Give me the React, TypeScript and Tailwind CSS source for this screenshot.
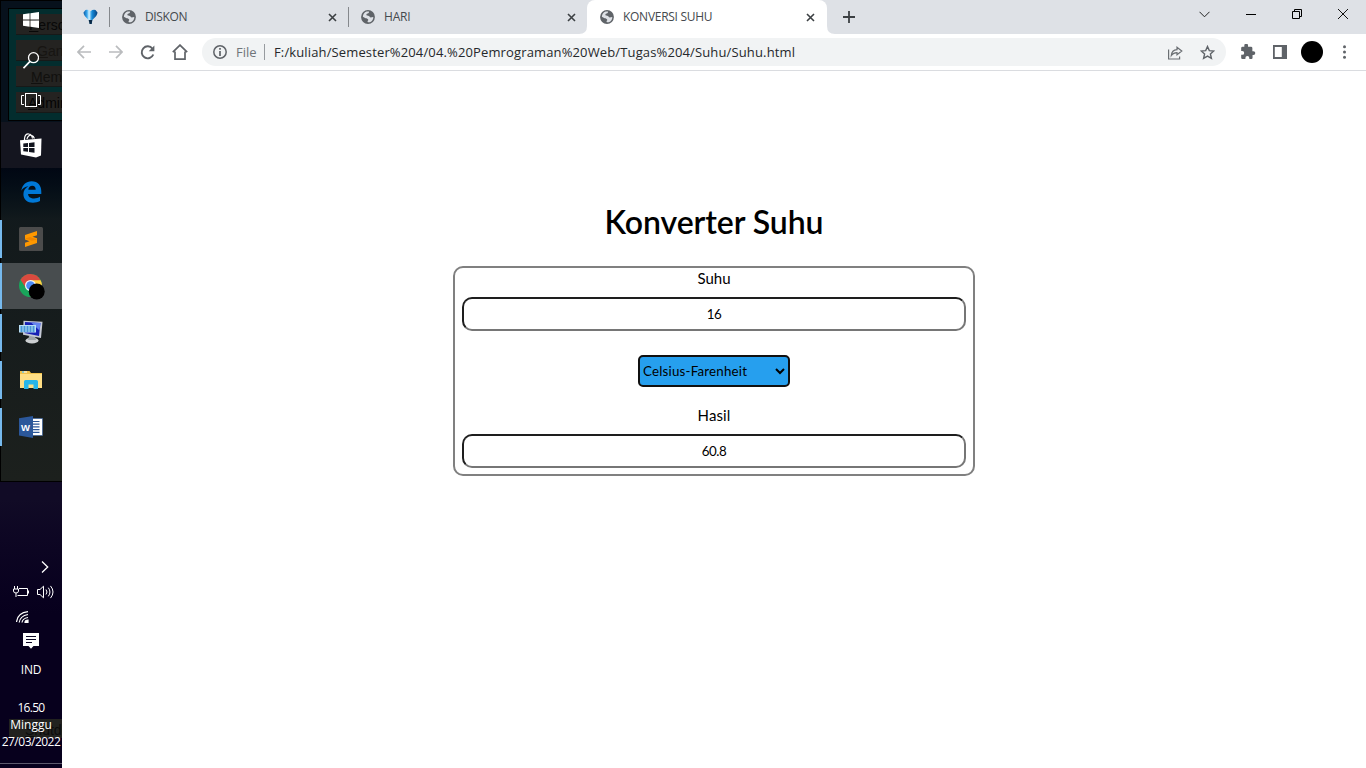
import React from 'react';

type TextProps = { text: string; className: string };

const segoe = "font-['Open_Sans','Noto_Sans',sans-serif]";
const rounded = "font-['Lato',sans-serif]";

function Globe() {
  return (
    <svg width="14" height="14" viewBox="0 0 15 15" className="shrink-0">
      <circle cx="7.5" cy="7.5" r="7.4" fill="#5f6368" />
      <path d="M8.6 1.6c-.2 1 .2 1.3-.8 1.8-1 .5-2 .3-2 1.5 0 1 .5 1.2 1.8 1.2 1.500 0 1.500 1.200 2.200 1.700.8.5 2.300-.4 3.400-.3.100 2.500-1.400 4.800-3.700 5.600-.8.100-2 .1-2.500-.2.100-1 .2-1.700.9-2.300-.5-1.400-1.700-1.700-3-1.800L2 7.200C2.100 4.700 3.600 2.300 6 1.700z" fill="#dee1e6" />
    </svg>
  );
}

function Close() {
  return (
    <svg width="9" height="9" viewBox="0 0 9 9" className="shrink-0">
      <path d="M1 1l7 7M8 1l-7 7" stroke="#3c4043" strokeWidth="1.6" />
    </svg>
  );
}

function TabLabel({ text, className }: TextProps) {
  return <span className={`${segoe} ml-[9px] flex-1 whitespace-nowrap text-[12px] leading-4 ${className}`}>{text}</span>;
}

function StartIcon() {
  return (
    <svg width="16" height="16" viewBox="0 0 16 16" fill="#fff">
      <path d="M0 2.300L6.600 1.300V7.500H0zM7.400 1.200L16 0V7.500H7.400zM0 8.400H6.600V14.700L0 13.700zM7.400 8.400H16V16L7.400 14.800z" />
    </svg>
  );
}

function SearchIcon() {
  return (
    <svg width="16" height="17" viewBox="0 0 16 17" fill="none" stroke="#fff" strokeWidth="1.300">
      <circle cx="10.500" cy="5.700" r="5" />
      <path d="M7 9.400L.5 16.200" strokeWidth="1.700" />
    </svg>
  );
}

function TaskViewIcon() {
  return (
    <svg width="20" height="14" viewBox="0 0 20 14" fill="none" stroke="#fff">
      <rect x="4.500" y=".5" width="11" height="13" />
      <path d="M3 2.500H.5v9H3M17 2.500h2.500v9H17" />
    </svg>
  );
}

function StoreIcon() {
  return (
    <svg width="22" height="25" viewBox="0 0 22 25">
      <path d="M4.500 7V5.500C5 2 7 .8 8.800 1c2 .1 3.200 2 3.700 4.500M7 6c.4-2.500 2.500-4.200 4.500-3.700 1.500.3 2.500 1.500 2.900 3.200" fill="none" stroke="#fff" strokeWidth="1.200" />
      <path d="M0 7.200L21.500 5.500 21 22.500 16 24.500 1 21.500z" fill="#fff" />
      <path d="M3.300 10.500L8 10v4H3.300zM9 9.900l5.500-.6V14H9zM3.300 15H8v3.800l-4.700-.6zM9 15h5.500v4.700L9 19z" fill="#11141e" />
    </svg>
  );
}

function EdgeIcon() {
  return (
    <svg width="21" height="22" viewBox="0 0 21 22">
      <path d="M.3 9.700C1.200 3.900 5.100.2 10.600.2c6.400 0 10 4.800 9.700 10.500v2.200H7.100c.1 3 2.800 4.500 5.900 4.500 2.200 0 4.300-.6 6-1.700v4.400c-2 1.100-4.400 1.700-7.100 1.700-5.500 0-9.500-3.400-9.500-8.500 0-3.500 1.800-6.300 5-8C4 5.700 1.500 7.500.3 9.700zm7-1h7.400c0-2.500-1.300-3.900-3.400-3.900S7.700 6.300 7.300 8.700z" fill="#0078d7" />
    </svg>
  );
}

function SublimeIcon() {
  return (
    <svg width="24" height="24" viewBox="0 0 24 24">
      <rect width="24" height="24" rx="1.500" fill="#4b4b4b" />
      <path d="M6 7.900L18 4v4.300L13.500 9.700l4.500 1.600v4.700L6 20v-4.300l4.500-1.500-4.500-1.700z" fill="#ff9800" />
      <path d="M6 11.500l7 2.200 5-1.300-7-2.300z" fill="#ef8500" />
    </svg>
  );
}

function ChromeIcon() {
  return (
    <svg className="relative left-px top-px" width="26" height="26" viewBox="0 0 26 26">
      <circle cx="11.500" cy="11.500" r="11.500" fill="#19a55b" />
      <path d="M11.500 11.500L1.500 5.700A11.500 11.500 0 0 1 21.500 6z" fill="#db4a3f" />
      <path d="M11.500 6.300h10.200a11.500 11.500 0 0 1-10.200 16.700l5-8.500z" fill="#ffcd41" />
      <path d="M11.500 6.300L1.500 5.700l5.500 8.500z" fill="#db4a3f" />
      <circle cx="11.500" cy="11.500" r="5.500" fill="#f3f5f8" />
      <circle cx="11.500" cy="11.500" r="4.300" fill="#4c8bf5" />
      <circle cx="17.700" cy="17.500" r="8" fill="#000" />
    </svg>
  );
}

function ComputerIcon() {
  return (
    <svg className="relative -top-px" width="24" height="24" viewBox="0 0 24 24">
      <ellipse cx="13" cy="20.500" rx="6.500" ry="3" fill="#cdd0d2" />
      <path d="M10 16h6l1 4H9z" fill="#9ea4a9" />
      <path d="M4.500.8L23.500 1.700 22 18 4 14.700z" fill="#c5c9d5" />
      <path d="M6 2l15.500 1L20 16 5.500 13z" fill="#1720b5" />
      <path d="M12 2.400l9.500.6-1 7.500z" fill="#6584ef" />
      <rect x="0" y="5" width="17" height="7.500" fill="#b9dff6" />
      <path d="M1.500 7H16M1.500 9H16M1.500 11H16" stroke="#2580cc" strokeWidth="1.300" strokeDasharray="2 1" />
    </svg>
  );
}

function FolderIcon() {
  return (
    <svg className="relative -top-px" width="22" height="19" viewBox="0 0 22 19">
      <path d="M0 1h9.500l1.500 2H22v14.500H0z" fill="#f1c24c" />
      <path d="M0 4h22v14H0z" fill="#ffdf85" />
      <path d="M2 2h5" stroke="#fff" />
      <path d="M2 2h2" stroke="#35b5dc" />
      <path d="M4 11.500q0-1.500 1.500-1.500h11q1.500 0 1.500 1.500V19h-4.500v-4.500h-5V19H4z" fill="#29b6e8" />
    </svg>
  );
}

function WordIcon() {
  return (
    <svg width="24" height="22" viewBox="0 0 24 22">
      <rect x="12" y="2.500" width="11.500" height="17" fill="#fff" stroke="#2b579a" strokeWidth=".6" />
      <path d="M14 5.500h6.500M14 8.200h6.500M14 10.900h6.500M14 13.600h6.500M14 16.300h6.500" stroke="#2b579a" strokeWidth="1.200" />
      <path d="M0 2.300L14 0v22L0 19.600z" fill="#2b579a" />
      <text x="2" y="14.500" fontFamily="Liberation Sans, sans-serif" fontWeight="700" fontSize="9.500" fill="#fff">W</text>
    </svg>
  );
}

const tasks = [
  { icon: <StoreIcon />, open: false, active: false },
  { icon: <EdgeIcon />, open: false, active: false },
  { icon: <SublimeIcon />, open: true, active: false },
  { icon: <ChromeIcon />, open: true, active: true },
  { icon: <ComputerIcon />, open: true, active: false },
  { icon: <FolderIcon />, open: true, active: false },
  { icon: <WordIcon />, open: true, active: false },
];

const ghostButtons = [
  { text: 'Perso', tone: 'text-[#080808] pl-[13px]' },
  { text: 'Gan', tone: 'text-[#171512] pl-[21px]' },
  { text: 'Mem', tone: 'text-[#11100e] pl-[15px]' },
  { text: 'Admin', tone: 'text-[#040404] pl-[12px]' },
];

function Taskbar() {
  return (
    <aside className="relative h-full w-[62px] shrink-0 overflow-hidden bg-gradient-to-b from-[#110b26] from-65% to-[#07001d] to-80% text-white">
      <div className="absolute inset-x-0 top-0 h-[482px] border border-r-0 border-black bg-gradient-to-b from-[#071321] from-0% via-[#131a1c] via-50% to-[#1c201d]">
        <div className="h-[121px] overflow-hidden bg-[#07111c] pl-[7px] pt-[7px]">
          <div className="flex h-[113px] w-[80px] flex-col gap-[5px] border border-black bg-[#032d2e] pl-[7px] pt-[5px] font-['Liberation_Sans',sans-serif] text-[14px]">
            {ghostButtons.map((b) => (
              <div key={b.text} className={`h-[21px] shrink-0 border-b border-[#171918] bg-[#242321] leading-[22px] first-letter:underline ${b.tone}`}>{b.text}</div>
            ))}
          </div>
        </div>
        <div className="h-[46px] bg-[#14151f]" />
        <div className="h-[50px] bg-gradient-to-b from-[#010713] to-[#11191c]" />
      </div>
      <div className="absolute left-[9px] top-[719px] h-[19px] w-[60px] bg-[#22221f] pl-4 font-['Liberation_Sans',sans-serif] text-[14px] leading-[22px] text-[#0c0c0c] first-letter:underline">Shutdo</div>
      <div className="absolute inset-x-0 top-[763px] h-px bg-[#5c596c]" />

      <div className="relative flex h-full flex-col">
        <div className="flex h-10 items-center justify-center"><StartIcon /></div>
        <div className="flex h-10 items-center justify-center"><SearchIcon /></div>
        <div className="flex h-10 items-center justify-center"><TaskViewIcon /></div>
        <div className="mt-[2px] flex flex-col gap-px">
          {tasks.map((task, i) => (
            <div key={i} className={`flex h-[46px] items-center ${task.active ? 'bg-[#484d4f]' : ''}`}>
              <div className={`w-[2px] ${task.active ? 'h-full' : 'h-[38px]'} ${task.open ? 'bg-[#76b9ed]' : ''}`} />
              <div className="flex flex-1 justify-center pr-[2px]">{task.icon}</div>
            </div>
          ))}
        </div>

        <div className="mt-[111px] flex h-3 justify-end pr-[13px]">
          <svg width="8" height="12" viewBox="0 0 8 12" fill="none" stroke="#fff" strokeWidth="1.300"><path d="M1 .5L6.700 6 1 11.500" /></svg>
        </div>
        <div className="mt-[12px] flex h-[14px] items-center gap-[8px] pl-[13px]">
          <svg width="16" height="14" viewBox="0 0 16 14" fill="none" stroke="#fff"><path d="M6 3.500h8.500v7H4.500M15.500 5.500v3M1.500 1v3M4.500 1v3M.5 4h5v2q0 2-2.500 2T.5 6zM3 8v4" /></svg>
          <svg width="17" height="14" viewBox="0 0 17 14" fill="none" stroke="#fff"><path d="M.5 4.500H3l3.500-3.300v11.600L3 9.500H.5zM9 4.500q2 2.500 0 5M11.300 2.700q3.300 4.300 0 8.600M13.500.9q5 6.100 0 12.200" /></svg>
        </div>
        <div className="mt-[12px] flex h-3 pl-4">
          <svg width="13" height="12" viewBox="0 0 13 12" fill="none" stroke="#fff" strokeWidth="1.200"><path d="M.5 11Q1.500 2 12 .7M3.200 11.500Q4 5 12 3.500M6 11.500Q6.500 7.500 12 6.500" /><path d="M9 11.500q0-2.500 3-2.500v2.500z" fill="#fff" /></svg>
        </div>
        <div className="mt-[10px] flex h-4 pl-[23px]">
          <svg width="16" height="16" viewBox="0 0 16 16"><path d="M0 0h16v13h-5.500L8 15.700 5.500 13H0z" fill="#fff" /><path d="M3 3.500h10M3 6.500h10M3 9.500h6" stroke="#0c0624" /></svg>
        </div>
        <div className={`${segoe} flex flex-col items-center whitespace-nowrap text-[12px]`}>
          <div className="mt-[13px] h-4 leading-4 tracking-[-0.2px]">IND</div>
          <div className="mt-[22px] h-4 leading-4 tracking-[-0.7px]">16.50</div>
          <div className="mt-px h-4 leading-4 tracking-normal">Minggu</div>
          <div className="mt-px h-4 leading-4 tracking-[-0.5px]">27/03/2022</div>
        </div>
      </div>
    </aside>
  );
}

function TabStrip() {
  return (
    <div className="flex h-[34px] bg-[#dee1e6] text-[#45494d]">
      <div className="flex w-[47px] items-center pl-[21px]">
        <svg width="15" height="16" viewBox="0 0 15 16">
          <defs><linearGradient id="drop" x1="0" x2="1"><stop stopColor="#0759a4" /><stop offset=".25" stopColor="#38a8ee" /><stop offset=".4" stopColor="#d7f4ff" /><stop offset=".6" stopColor="#168cdb" /><stop offset="1" stopColor="#063f7c" /></linearGradient></defs>
          <path d="M2.500 1Q5 .2 7.500 2.200 10 .2 12.500 1l2 2.500q0 3-5.200 7.500L8.700 15H6.500L5.700 11Q.5 6.500.5 3.500z" fill="url(#drop)" />
          <path d="M5.700 11h3.600l-.6 4H6.500z" fill="#092946" />
        </svg>
      </div>
      <div className="mt-[7px] h-5 w-px bg-[#85888c]" />
      <div className="flex w-[238px] items-center pl-[12px] pr-[11px]">
        <Globe /><TabLabel text="DISKON" className="tracking-[-0.35px]" /><Close />
      </div>
      <div className="mt-[7px] h-5 w-px bg-[#85888c]" />
      <div className="relative z-10 flex w-[238px] items-center pl-[12px] pr-[11px]">
        <Globe /><TabLabel text="HARI" className="tracking-[-0.2px]" /><Close />
      </div>
      <div className="relative flex w-[240px] items-center rounded-t-[8px] bg-white pl-[13px] pr-[12px]">
        <svg className="absolute -left-2 bottom-0" width="8" height="8" viewBox="0 0 8 8"><path d="M8 0v8H0Q8 8 8 0" fill="#fff" /></svg>
        <svg className="absolute -right-2 bottom-0" width="8" height="8" viewBox="0 0 8 8"><path d="M0 0v8h8Q0 8 0 0" fill="#fff" /></svg>
        <Globe /><TabLabel text="KONVERSI SUHU" className="tracking-[-0.28px]" /><Close />
      </div>
      <div className="flex flex-1 items-center pl-[16px]">
        <svg width="12" height="12" viewBox="0 0 12 12"><path d="M6 0v12M0 6h12" stroke="#3c4043" strokeWidth="1.800" /></svg>
      </div>
      <div className="flex h-7 items-center gap-[36px] pr-[18px]">
        <svg width="11" height="7" viewBox="0 0 11 7" fill="none" stroke="#222"><path d="M.5.8l5 5 5-5" /></svg>
        <svg width="10" height="10" viewBox="0 0 10 10"><path d="M0 5.500h10" stroke="#000" /></svg>
        <svg width="10" height="10" viewBox="0 0 10 10" fill="none" stroke="#000"><path d="M.5 2.500h7v7h-7zM2.500 2.500v-2h7v7h-2" /></svg>
        <svg width="10" height="10" viewBox="0 0 10 10"><path d="M0 0l10 10M10 0L0 10" stroke="#111" /></svg>
      </div>
    </div>
  );
}

function Toolbar() {
  return (
    <div className="flex h-[37px] items-center border-b border-[#dadce0] bg-white pl-[15px] pr-[20px]">
      <svg width="14" height="14" viewBox="0 0 14 14" fill="none" stroke="#babcbe" strokeWidth="1.700"><path d="M14 7H1.500M7 .8L1 7l6 6.200" /></svg>
      <svg className="ml-[18px]" width="14" height="14" viewBox="0 0 14 14" fill="none" stroke="#babcbe" strokeWidth="1.700"><path d="M0 7h12.500M7 .8L13 7l-6 6.200" /></svg>
      <svg className="ml-[17px]" width="15" height="15" viewBox="0 0 15 15" fill="none" stroke="#5f6368" strokeWidth="1.900"><path d="M12.500 3.700A6 6 0 1 0 13.300 9.500" /><path d="M14.400.6v5.700H8.700z" fill="#5f6368" stroke="none" /></svg>
      <svg className="ml-[17px]" width="16" height="16" viewBox="0 0 16 16" fill="none" stroke="#5f6368" strokeWidth="1.700"><path d="M.8 8.200L8 1.100l7.200 7.100M3 7.500v7.600h10V7.500" /></svg>
      <div className={`${segoe} ml-[14px] flex h-7 flex-1 items-center whitespace-nowrap rounded-full bg-[#f1f3f4] pl-[11px] pr-[11px] text-[13px] text-[#25282b]`}>
        <svg width="14" height="14" viewBox="0 0 14 14"><circle cx="7" cy="7" r="6.200" fill="none" stroke="#5f6368" strokeWidth="1.500" /><path d="M7 3v1.700M7 6v5" stroke="#5f6368" strokeWidth="1.700" /></svg>
        <span className="ml-[9px] w-[28px] pt-px text-[#70757a]">File</span>
        <span className="h-4 w-px bg-[#979b9f]" />
        <span className="ml-[9px] flex-1 pt-px tracking-[0.135px]">F:/kuliah/Semester%204/04.%20Pemrograman%20Web/Tugas%204/Suhu/Suhu.html</span>
        <svg width="16" height="15" viewBox="0 0 16 15" fill="none" stroke="#6a6e72" strokeWidth="1.200"><path d="M1.600 4.500v9.500h11v-2.500M4.300 10.500C4.600 6.500 6.500 4.800 10 4.700V2.200L14.800 6 10 9.800V7.700C7.500 7.700 5.700 8.500 4.300 10.500z" /></svg>
        <svg className="ml-[17px]" width="15" height="15" viewBox="0 0 15 15" fill="none" stroke="#5f6368" strokeWidth="1.400"><path d="M7.500 1.500l1.800 4.100 4.500.4-3.400 3 1 4.400-3.900-2.300-3.900 2.300 1-4.400-3.400-3 4.500-.4z" /></svg>
      </div>
      <svg className="ml-[14px]" width="16" height="16" viewBox="0 0 16 16"><path d="M13.500 8H12.400V4.800q0-1.400-1.400-1.400H8V2.200a1.900 1.900 0 0 0-3.800 0v1.200H2.500Q1 3.400 1 4.800v2.900h1.100a2 2 0 0 1 0 4H1v3q0 1.300 1.300 1.300h3v-1.200a2 2 0 0 1 4 0V16h2.100q1.200 0 1.200-1.300v-2.900h.9a1.900 1.900 0 0 0 0-3.800z" transform="translate(.2 -.6) scale(.98)" fill="#5f6368" /></svg>
      <svg className="ml-[17px]" width="14" height="14" viewBox="0 0 14 14"><path d="M0 0h14v14H0zM1.800 2v10h7V2z" fillRule="evenodd" fill="#5f6368" /></svg>
      <div className="ml-[14px] size-[22px] rounded-full bg-black" />
      <svg className="ml-[20px]" width="3" height="14" viewBox="0 0 3 14" fill="#5f6368"><circle cx="1.500" cy="1.700" r="1.500" /><circle cx="1.500" cy="7" r="1.500" /><circle cx="1.500" cy="12.300" r="1.500" /></svg>
    </div>
  );
}

function Field({ value }: { value: string }) {
  return (
    <div className="flex h-[34px] items-center justify-center rounded-[10px] border-2 border-b-[#767676] border-l-[#1e1e1e] border-r-[#767676] border-t-[#1e1e1e] text-[13.333px] leading-4 tracking-[-0.4px] text-black">{value}</div>
  );
}

function Page() {
  return (
    <main className={`${rounded} flex flex-1 flex-col items-center bg-white text-black`}>
      <h1 className="mt-[131px] whitespace-nowrap text-[32px] font-semibold leading-[40px] tracking-[-0.07px]">Konverter Suhu</h1>
      <section className="mt-[24px] h-[210px] w-[522px] rounded-[10px] border-2 border-[#808080] px-[7px] text-center text-[15px]">
        <div className="h-[29px] leading-[20px]">Suhu</div>
        <Field value="16" />
        <div className="mx-auto mt-[24px] flex h-8 w-[152px] items-center justify-between rounded-[5px] border-2 border-[#101010] bg-[#269fee] pl-[3px] pr-[3px] text-[13.333px] text-black">
          <span className="whitespace-nowrap pt-px tracking-[0.2px]">Celsius-Farenheit</span>
          <svg width="10" height="7" viewBox="0 0 10 7" fill="none" stroke="#000" strokeWidth="2"><path d="M1 1l4 4 4-4" /></svg>
        </div>
        <div className="mt-[18px] h-[29px] leading-[20px] tracking-[0.1px]">Hasil</div>
        <Field value="60.8" />
      </section>
    </main>
  );
}

export default function App() {
  return (
    <div className="flex h-screen w-screen overflow-hidden bg-white">
      <Taskbar />
      <div className="flex min-w-0 flex-1 flex-col">
        <TabStrip />
        <Toolbar />
        <Page />
      </div>
    </div>
  );
}
